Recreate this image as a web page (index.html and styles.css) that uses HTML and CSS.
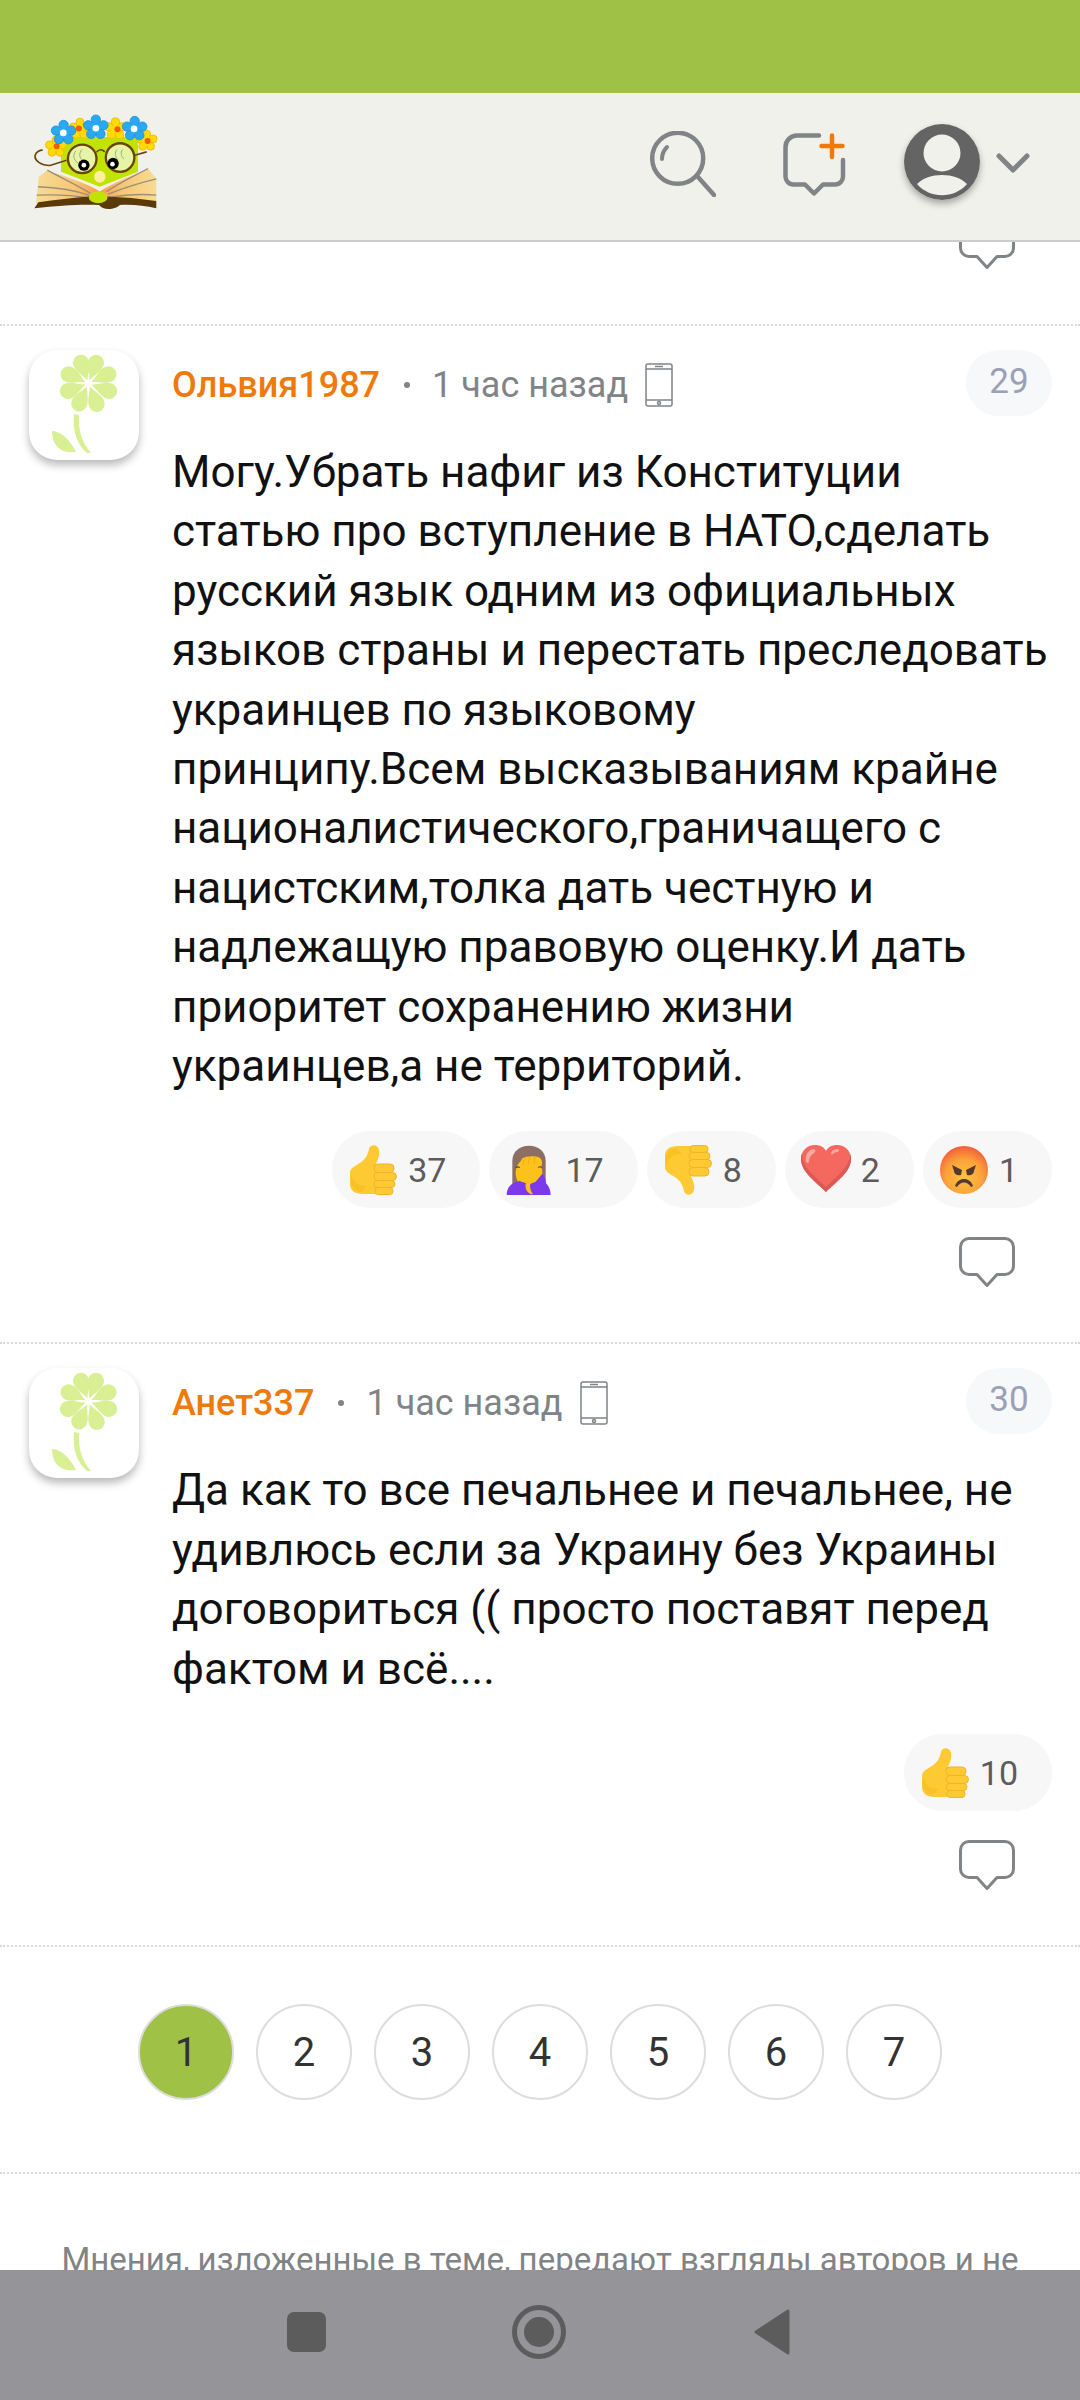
FILE: index.html
```html
<!DOCTYPE html>
<html lang="ru">
<head>
<meta charset="utf-8">
<title>Комментарии</title>
<link rel="stylesheet" href="styles.css">
</head>
<body>
<svg class="defs" width="0" height="0" aria-hidden="true">
  <defs>
    <path id="petal" d="M0 -3C-2 -9 -8 -15 -8 -22A8 8 0 0 1 8 -22C8 -15 2 -9 0 -3Z"/>
    <symbol id="flower" viewBox="0 0 110 110">
      <g fill="#d8f093">
        <g transform="translate(59.5 33.5)">
          <use href="#petal" transform="rotate(-20)"/>
          <use href="#petal" transform="rotate(20)"/>
          <use href="#petal" transform="rotate(65)"/>
          <use href="#petal" transform="rotate(110)"/>
          <use href="#petal" transform="rotate(158)"/>
          <use href="#petal" transform="rotate(205)"/>
          <use href="#petal" transform="rotate(250)"/>
          <use href="#petal" transform="rotate(295)"/>
        </g>
        <path d="M45 64C43 80 48 95 58 103L62 103C53 93 49 80 50 65Z"/>
        <path d="M23 81C33 81 42 92 47 102C33 104 23 97 23 81Z"/>
      </g>
    </symbol>
    <symbol id="bubble" viewBox="0 0 56 51">
      <path d="M10 1.500h36a8.500 8.500 0 0 1 8.500 8.500v19a8.500 8.500 0 0 1-8.500 8.500h-8L28 48.500 18 37.500h-8A8.500 8.500 0 0 1 1.500 29V10A8.500 8.500 0 0 1 10 1.500z" fill="none" stroke="#808487" stroke-width="3" stroke-linejoin="round"/>
    </symbol>
    <symbol id="phone" viewBox="0 0 28 44">
      <g fill="none" stroke="#808487" stroke-width="1.500">
        <rect x="1" y="1" width="26" height="42" rx="2"/>
        <path d="M1 6h26M1 37h26M10 3.500h8"/>
        <circle cx="14" cy="40" r="1.500"/>
      </g>
    </symbol>
    <symbol id="thumb" viewBox="0 0 48 50">
      <path d="M1 28c0-5 5-7 10-10 6-4 8-9 9-14 1-5 9-5 10 1 1 5-1 9-3 14h13c5 0 5 30 0 30H14C5 49 1 45 1 39z" fill="#fdca33"/>
      <path d="M12 47c-6-1-9-4-10-9 0-5 0-8 0-8 3 8 8 11 16 11z" fill="#f7a800" opacity=".3"/>
      <g fill="#fdca33" stroke="#f1b32a" stroke-width="1">
        <rect x="25" y="19" width="20" height="8.500" rx="4"/>
        <rect x="25" y="27.500" width="22.500" height="8" rx="4"/>
        <rect x="25" y="35.500" width="21" height="7" rx="3.500"/>
        <rect x="26" y="42.500" width="18" height="7" rx="3.200"/>
      </g>
    </symbol>
    <symbol id="thumbdown" viewBox="0 0 48 50">
      <use href="#thumb" width="48" height="50" transform="matrix(1 0 0 -1 0 50)"/>
    </symbol>
    <symbol id="facepalm" viewBox="0 0 150 150">
      <path d="M22 128V48C22 18 45 2 72 2s50 16 50 46v80z" fill="#8d6e63"/>
      <ellipse cx="72" cy="84" rx="40" ry="46" fill="#fcc21b"/>
      <path d="M5 150c0-24 14-36 38-42l30 10 20-8 22-2c14 10 22 24 22 42z" fill="#7c3aed"/>
      <path d="M112 86c10 12 14 30 10 50l-30 10-8-26z" fill="#7c3aed"/>
      <path d="M52 40c12-8 40-8 52-2 10 6 8 24 2 36-6 14-18 26-28 38-6 10-2 24 6 36-10 0-20-8-22-20-2-10 2-20 10-28-14-8-20-18-24-30-2-12-2-22 4-30z" fill="#fcc21b"/>
      <path d="M62 38c-6 8-8 16-8 22M76 34c-4 8-6 16-6 24M90 36c-2 8-2 16-4 22" fill="none" stroke="#e9a400" stroke-width="2"/>
      <path d="M32 68c4-3 9-3 12 0M100 68c3-3 8-3 11 0" fill="none" stroke="#5d4037" stroke-width="3.500"/>
    </symbol>
    <symbol id="heart" viewBox="0 0 50 50">
      <path d="M25 47C15 37 0 27 0 14 0 6 6 0 14 0c5 0 9 2 11 6 2-4 6-6 11-6 8 0 14 6 14 14 0 13-15 23-25 33z" fill="#f56860"/>
      <path d="M25 47C15 37 0 27 0 14c0-2 0-3 1-5 0 13 14 23 24 33 10-10 24-20 24-33 1 2 1 3 1 5 0 13-15 23-25 33z" fill="#dc5a55"/>
      <path d="M5 16c-1-7 3-11 7-12 3 0 3 3 1 4-3 2-5 5-5 8 0 3-3 2-3 0zM30 8c1-3 4-4 7-4 2 1 1 3-1 3-2 0-3 1-4 2s-2 0-2-1z" fill="#f9a8a2"/>
    </symbol>
    <symbol id="angry" viewBox="0 0 50 50">
      <defs>
        <radialGradient id="angryFill" cx="50%" cy="65%" r="62%">
          <stop offset="0" stop-color="#fdc33f"/>
          <stop offset=".6" stop-color="#fba33a"/>
          <stop offset="1" stop-color="#f4643a"/>
        </radialGradient>
      </defs>
      <circle cx="25" cy="25" r="24" fill="url(#angryFill)"/>
      <g fill="#543930">
        <path d="M13 20l10 5-1 5c-4 1-7-1-7-4z"/>
        <path d="M37 20l-10 5 1 5c4 1 7-1 7-4z"/>
        <path d="M16 41c2-5 5-7 9-7s7 2 9 7l-2 1c-2-3-4-4.500-7-4.500S20 39 18 42z"/>
      </g>
    </symbol>
    <g id="fl">
      <circle cx="0" cy="-24" r="14"/>
      <circle cx="23" cy="-7" r="14"/>
      <circle cx="14" cy="19" r="14"/>
      <circle cx="-14" cy="19" r="14"/>
      <circle cx="-23" cy="-7" r="14"/>
      <circle r="16" stroke="none"/>
    </g>
  </defs>
</svg>

<div class="app">
  <div class="statusbar"></div>

  <header class="header">
    <svg class="logo" viewBox="100 95 380 295" aria-label="логотип">
      <defs>
        <linearGradient id="pageL" x1="0" x2="1" y1="0" y2="0">
          <stop offset="0" stop-color="#f7dc94"/><stop offset=".6" stop-color="#f8c677"/><stop offset="1" stop-color="#f99b48"/>
        </linearGradient>
        <linearGradient id="pageR" x1="1" x2="0" y1="0" y2="0">
          <stop offset="0" stop-color="#f7dc94"/><stop offset=".6" stop-color="#f8c677"/><stop offset="1" stop-color="#f99b48"/>
        </linearGradient>
      </defs>
      <path d="M183 170h232v105l-115 45-117-45z" fill="#c2e300"/>
      <path d="M108 372l8-82 26-20c55 20 110 35 158 64v38z" fill="url(#pageL)"/>
      <path d="M470 372v-76l-25-31c-55 25-100 40-145 69v38z" fill="url(#pageR)"/>
      <g stroke="#9a8f7a" stroke-width="4" fill="none">
        <path d="M142 270c40 22 90 45 130 70M114 320c50 2 110 10 155 26M110 345c55-2 110 0 155 8"/>
        <path d="M445 265c-40 22-90 45-125 70M470 296c-50 12-100 28-145 46M470 345c-50-4-100 0-145 8"/>
      </g>
      <path d="M103 385l12-18c50-8 105-14 155-18l50 0c50 2 100 6 150 14v22c-35-8-70-12-110-10-8 12-50 20-62 0-65-2-120 2-195 10z" fill="#5a3a08"/>
      <ellipse cx="295" cy="352" rx="28" ry="18" fill="#c2e300"/>
      <ellipse cx="300" cy="290" rx="17" ry="18" fill="#ffef9f"/>
      <path d="M200 240l-50 16c-25 0-50-14-44-32 2-8 12-14 22-14" fill="none" stroke="#6a4310" stroke-width="5"/>
      <path d="M405 225l36-10" stroke="#6a4310" stroke-width="5"/>
      <circle cx="247" cy="236" r="43" fill="#e6f5a5" stroke="#6a4310" stroke-width="7"/>
      <circle cx="361" cy="232" r="43" fill="#e6f5a5" stroke="#6a4310" stroke-width="7"/>
      <path d="M290 216q12-14 25-1" fill="none" stroke="#6a4310" stroke-width="5"/>
      <path d="M228 212c-10 12-8 26 6 36M246 208c-10 12-8 26 4 34M352 208c-8 10-6 20 2 30M368 208c-6 10-4 20 4 28" fill="none" stroke="#9bab82" stroke-width="3"/>
      <circle cx="252" cy="255" r="17" fill="#000"/><circle cx="252" cy="255" r="7" fill="#fff"/>
      <circle cx="340" cy="250" r="17" fill="#000"/><circle cx="338" cy="252" r="7" fill="#fff"/>
      <g fill="#ffdc00" stroke="#f2b600" stroke-width="3">
        <use href="#fl" transform="translate(168 200) scale(.85)"/>
        <use href="#fl" transform="translate(240 146) scale(.85)"/>
        <use href="#fl" transform="translate(347 146) scale(.88)"/>
        <use href="#fl" transform="translate(441 182) scale(.85)"/>
      </g>
      <g fill="#2aa9f3" stroke="#1d8fd8" stroke-width="2.500">
        <use href="#fl" transform="translate(191 158)"/>
        <use href="#fl" transform="translate(288 142)"/>
        <use href="#fl" transform="translate(405 146)"/>
      </g>
      <g fill="#fff"><circle cx="190" cy="158" r="10"/><circle cx="288" cy="144" r="10"/><circle cx="403" cy="146" r="10"/></g>
      <g fill="#f4590e"><circle cx="237" cy="145" r="9"/><circle cx="353" cy="147" r="9"/><circle cx="444" cy="182" r="9"/><circle cx="170" cy="198" r="9"/></g>
    </svg>
    <div class="header-actions">
      <svg class="icon-search" viewBox="0 0 66 66">
        <circle cx="27.700" cy="27.300" r="25.500" fill="none" stroke="#808487" stroke-width="4.500"/>
        <path d="M48 46l16 18" stroke="#808487" stroke-width="4.500" stroke-linecap="round"/>
        <path d="M12 28c0-5 2-9 5-12" fill="none" stroke="#808487" stroke-width="4" stroke-linecap="round"/>
      </svg>
      <svg class="icon-compose" viewBox="0 0 63 63">
        <path d="M36 2.500H14A11.500 11.500 0 0 0 2.500 14v29a8 8 0 0 0 8 8.500H22l9 9 9-9h12a8 8 0 0 0 8-8.500V27" fill="none" stroke="#808487" stroke-width="4.500" stroke-linecap="round" stroke-linejoin="round"/>
        <path d="M49 2.500v21.500M38.500 13h21" stroke="#ee7a0c" stroke-width="4.500" stroke-linecap="round"/>
      </svg>
      <div class="account">
        <svg class="icon-user" viewBox="0 0 76 76">
          <circle cx="38" cy="38" r="38" fill="#646464"/>
          <circle cx="38" cy="29" r="18.500" fill="#f0f1ea"/>
          <path d="M13 60c6-6 15-9 25-9s19 3 25 9c-13 15-37 15-50 0z" fill="#f0f1ea"/>
        </svg>
      </div>
      <svg class="icon-chevron" viewBox="0 0 34 20">
        <path d="M3 3l14 14L31 3" fill="none" stroke="#808487" stroke-width="5" stroke-linecap="round" stroke-linejoin="round"/>
      </svg>
    </div>
  </header>

  <main class="content">
    <div class="stub">
      <svg class="bubble stub-bubble"><use href="#bubble"/></svg>
    </div>

    <article class="comment">
      <div class="avatar"><svg class="avatar-img"><use href="#flower"/></svg></div>
      <div class="comment-main">
        <div class="meta">
          <span class="author">Ольвия1987</span>
          <span class="dot"></span>
          <span class="time">1 час назад</span>
          <svg class="phone"><use href="#phone"/></svg>
        </div>
        <p class="text">Могу.Убрать нафиг из Конституции статью про вступление в НАТО,сделать русский язык одним из официальных языков страны и перестать преследовать украинцев по языковому<br>принципу.Всем высказываниям крайне националистического,граничащего с нацистским,толка дать честную и надлежащую правовую оценку.И дать приоритет сохранению жизни украинцев,а не территорий.</p>
        <div class="reactions">
          <span class="pill"><svg class="emoji"><use href="#thumb"/></svg>37</span>
          <span class="pill"><svg class="emoji"><use href="#facepalm"/></svg>17</span>
          <span class="pill"><svg class="emoji"><use href="#thumbdown"/></svg>8</span>
          <span class="pill"><svg class="emoji"><use href="#heart"/></svg>2</span>
          <span class="pill"><svg class="emoji"><use href="#angry"/></svg>1</span>
        </div>
        <div class="reply"><svg class="bubble"><use href="#bubble"/></svg></div>
      </div>
      <span class="num">29</span>
    </article>

    <article class="comment">
      <div class="avatar"><svg class="avatar-img"><use href="#flower"/></svg></div>
      <div class="comment-main">
        <div class="meta">
          <span class="author">Анет337</span>
          <span class="dot"></span>
          <span class="time">1 час назад</span>
          <svg class="phone"><use href="#phone"/></svg>
        </div>
        <p class="text">Да как то все печальнее и печальнее, не удивлюсь если за Украину без Украины договориться (( просто поставят перед фактом и всё....</p>
        <div class="reactions">
          <span class="pill"><svg class="emoji"><use href="#thumb"/></svg>10</span>
        </div>
        <div class="reply"><svg class="bubble"><use href="#bubble"/></svg></div>
      </div>
      <span class="num">30</span>
    </article>

    <nav class="pager">
      <a class="page page-active">1</a>
      <a class="page">2</a>
      <a class="page">3</a>
      <a class="page">4</a>
      <a class="page">5</a>
      <a class="page">6</a>
      <a class="page">7</a>
    </nav>

    <p class="disclaimer">Мнения, изложенные в теме, передают взгляды авторов и не</p>
  </main>

  <div class="navbar">
    <span class="nav-square"></span>
    <svg class="nav-home" viewBox="0 0 54 54">
      <circle cx="27" cy="27" r="24.500" fill="none" stroke="#5c5c5c" stroke-width="5"/>
      <circle cx="27" cy="27" r="15" fill="#5c5c5c"/>
    </svg>
    <svg class="nav-back" viewBox="0 0 36 46">
      <path d="M34 2v42L2 23z" fill="#5c5c5c" stroke="#5c5c5c" stroke-width="3" stroke-linejoin="round"/>
    </svg>
  </div>
</div>
</body>
</html>
```
FILE: styles.css
```css
* { box-sizing: border-box; }
html, body { margin: 0; padding: 0; background: #fff; }
body { font-family: Roboto, "Noto Sans", sans-serif; }
.defs { position: absolute; }

.app { position: relative; width: 1080px; height: 2400px; overflow: hidden; display: flex; flex-direction: column; }
.statusbar { height: 93px; flex: none; background: #9fc146; }

.header { height: 149px; flex: none; background: #f0f1ea; border-bottom: 2px solid #cccccc; display: flex; align-items: flex-start; position: relative; z-index: 2; }
.logo { width: 127px; height: 98px; margin: 19px 0 0 33px; flex: none; }
.header-actions { margin-left: auto; display: flex; align-items: flex-start; }
.icon-search { width: 66px; height: 66px; margin-top: 38px; flex: none; }
.icon-compose { width: 63px; height: 63px; margin: 40px 0 0 67px; flex: none; }
.account { margin: 31px 0 0 58px; width: 76px; height: 76px; border-radius: 50%; box-shadow: 0 4px 7px rgba(0,0,0,.3); flex: none; }
.icon-user { display: block; width: 76px; height: 76px; }
.icon-chevron { width: 34px; height: 20px; margin: 60px 50px 0 16px; flex: none; }

.content { flex: 1; min-height: 0; }
.stub { height: 82px; position: relative; overflow: hidden; }
.bubble { display: block; width: 56px; height: 51px; }
.stub-bubble { position: absolute; right: 65px; top: -23px; }

.comment { border-top: 2px dotted #d9d9d9; display: flex; position: relative; padding: 24px 28px 54px 29px; }
.avatar { width: 110px; height: 110px; border-radius: 28px; background: #fff; box-shadow: 0 5px 8px rgba(0,0,0,.28); flex: none; }
.avatar-img { display: block; width: 110px; height: 110px; }
.comment-main { margin-left: 33px; flex: 1; min-width: 0; }
.meta { height: 66px; padding-top: 3px; display: flex; align-items: center; }
.author { font-size: 36px; font-weight: 500; color: #ee7a0c; }
.dot { width: 6px; height: 6px; border-radius: 50%; background: #808487; margin: 0 22px 0 24px; }
.time { font-size: 36px; color: #808487; }
.phone { width: 28px; height: 44px; margin-left: 17px; }
.text { margin: 27px 0 0; font-size: 44px; line-height: 59.4px; color: #111; }
.reactions { display: flex; justify-content: flex-end; gap: 9px; margin-top: 35px; }
.pill { height: 77px; padding: 0 34px 0 16px; border-radius: 38px; background: #f7f7f7; display: flex; align-items: center; gap: 10px; font-size: 34px; color: #5c5c5c; }
.emoji { width: 50px; height: 50px; flex: none; }
.reply { display: flex; justify-content: flex-end; padding: 29px 37px 0 0; }

.num { position: absolute; right: 28px; top: 24px; width: 86px; height: 66px; padding-bottom: 3px; border-radius: 33px; background: #f7f8fa; color: #9aa0b5; font-size: 35px; display: flex; align-items: center; justify-content: center; }

.pager { border-top: 2px dotted #d9d9d9; height: 227px; display: flex; justify-content: center; align-items: flex-start; gap: 22px; padding-top: 57px; }
.page { width: 96px; height: 96px; border: 2px solid #dddddd; border-radius: 50%; display: flex; align-items: center; justify-content: center; font-size: 40px; color: #333; }
.page-active { background: #9fc146; }

.disclaimer { border-top: 2px dotted #d9d9d9; margin: 0; padding: 66px 40px 0; text-align: center; font-size: 33px; color: #808487; line-height: 40px; white-space: nowrap; }

.navbar { position: absolute; left: 0; right: 0; bottom: 0; height: 130px; padding: 0 0 6px 287px; background: #959599; display: flex; align-items: center; }
.nav-square { display: block; width: 39px; height: 40px; border-radius: 7px; background: #5c5c5c; flex: none; }
.nav-home { width: 54px; height: 54px; margin-left: 186px; flex: none; }
.nav-back { width: 36px; height: 46px; margin-left: 188px; flex: none; }
```
